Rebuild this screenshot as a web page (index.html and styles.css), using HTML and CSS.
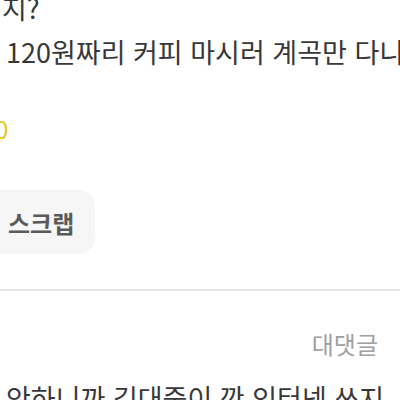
FILE: index.html
```html
<!DOCTYPE html>
<html lang="ko">
<head>
  <meta charset="UTF-8">
  <meta name="viewport" content="width=device-width, initial-scale=1.0">
  <title>댓글</title>
  <link rel="stylesheet" href="styles.css">
</head>
<body>
  <div class="page">
    <div class="post-body">
      <div class="line first">지?</div>
      <div class="line">120원짜리 커피 마시러 계곡만 다니는</div>
    </div>
    <div class="count">0</div>
    <div class="actions">
      <button class="scrap-btn">스크랩</button>
    </div>
    <hr class="divider">
    <div class="reply-row">
      <span class="reply-link">대댓글</span>
    </div>
    <div class="comment">
      <div class="line">안하니까 김대중이 깐 인터넷 쓰지</div>
    </div>
  </div>
</body>
</html>
```

FILE: styles.css
```css
html, body {
  margin: 0;
  background: #ffffff;
}

.page {
  width: 400px;
  height: 400px;
  overflow: hidden;
  font-family: "Noto Sans CJK KR", "Noto Sans", sans-serif;
  color: #383838;
}

.post-body {
  margin-top: -14px;
  padding-left: 6px;
}

.line {
  font-size: 27px;
  line-height: 46px;
  white-space: nowrap;
}

.line.first {
  margin-left: -4px;
  line-height: 43px;
}

.count {
  margin-top: 37px;
  margin-left: -5px;
  font-size: 24px;
  line-height: 34px;
  color: #e8c61a;
}

.actions {
  margin-top: 44px;
  display: flex;
}

.scrap-btn {
  margin-left: -16px;
  height: 64px;
  padding: 0 21px 0 24px;
  border: none;
  border-radius: 16px;
  background: #f6f6f6;
  font-family: "Noto Sans CJK KR", sans-serif;
  font-size: 24px;
  font-weight: 700;
  color: #5a5a5a;
}

.divider {
  margin: 35px 0 0;
  border: none;
  height: 2px;
  background: #e6e6e6;
}

.reply-row {
  margin-top: 38px;
  display: flex;
  justify-content: flex-end;
  padding-right: 22px;
  font-size: 24px;
  line-height: 30px;
}

.reply-link {
  color: #a0a0a0;
}

.comment {
  margin-top: 16px;
  padding-left: 6px;
}
```
